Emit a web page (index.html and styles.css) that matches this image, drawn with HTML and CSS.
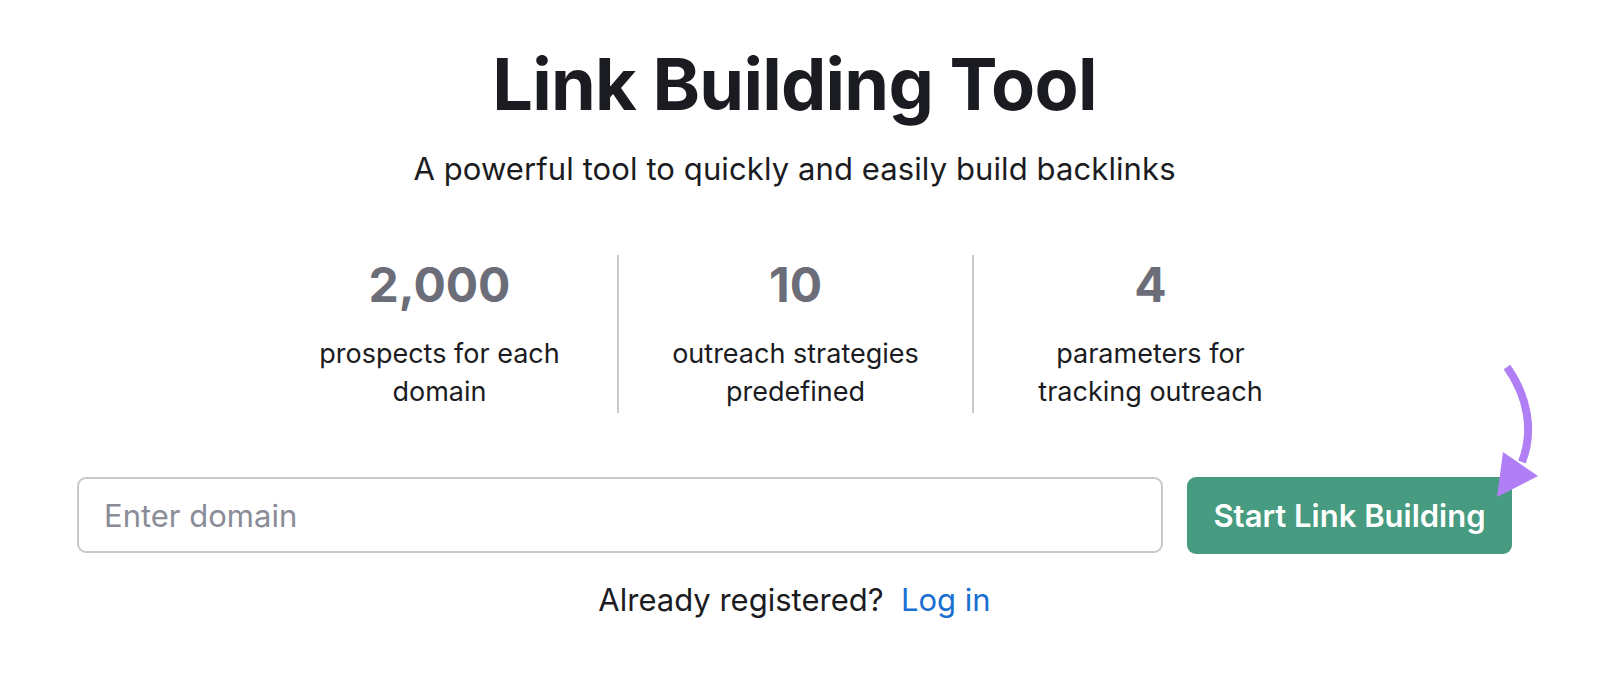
FILE: index.html
```html
<!DOCTYPE html>
<html lang="en">
<head>
<meta charset="utf-8">
<title>Link Building Tool</title>
<link rel="stylesheet" href="styles.css">
</head>
<body>
<main class="page">
  <h1 class="title">Link Building Tool</h1>
  <p class="subtitle">A powerful tool to quickly and easily build backlinks</p>
  <div class="stats">
    <div class="stat">
      <div class="stat-num">2,000</div>
      <div class="stat-text">prospects for each<br>domain</div>
    </div>
    <div class="stat">
      <div class="stat-num">10</div>
      <div class="stat-text">outreach strategies<br>predefined</div>
    </div>
    <div class="stat">
      <div class="stat-num">4</div>
      <div class="stat-text">parameters for<br>tracking outreach</div>
    </div>
  </div>
  <form class="search" onsubmit="return false">
    <input class="domain" type="text" placeholder="Enter domain">
    <button class="start" type="submit">Start Link Building</button>
    <svg class="arrow" width="60" height="150" viewBox="0 0 60 150" aria-hidden="true">
      <path d="M9 6 C 30 36, 36 70, 24 101" fill="none" stroke="#b07ff5" stroke-width="8" stroke-linecap="butt"/>
      <polygon points="5,91 40,115 -1,136" fill="#b07ff5"/>
    </svg>
  </form>
  <p class="login">Already registered?&nbsp; <a href="#" class="login-link">Log in</a></p>
</main>
</body>
</html>
```
FILE: styles.css
```css
html, body {
  margin: 0;
  padding: 0;
  background: #ffffff;
}
body {
  font-family: Inter, "Noto Sans", "Liberation Sans", sans-serif;
  color: #1b1c22;
}
.page {
  padding: 40px 88px 0 77px;
  display: flex;
  flex-direction: column;
  align-items: center;
}
.title {
  margin: 0;
  font-size: 72px;
  line-height: 88px;
  font-weight: 700;
  letter-spacing: -0.75px;
  color: #1b1c22;
}
.subtitle {
  margin: 21px 0 0;
  font-size: 31px;
  line-height: 40px;
  font-weight: 400;
  letter-spacing: 0.1px;
  color: #1b1c22;
}
.stats {
  margin-top: 66px;
  display: flex;
}
.stat {
  width: 355px;
  text-align: center;
  padding: 2px 0 2px;
  box-sizing: border-box;
}
.stat + .stat {
  border-left: 2px solid #cacbd0;
}
.stat-num {
  font-size: 48px;
  line-height: 56px;
  font-weight: 700;
  color: #6b6d78;
}
.stat-text {
  margin-top: 22px;
  font-size: 27px;
  line-height: 38px;
  color: #1b1c22;
}
.search {
  position: relative;
  margin-top: 64px;
  align-self: stretch;
  display: flex;
  gap: 24px;
}
.domain {
  flex: 1;
  height: 76px;
  box-sizing: border-box;
  border: 2px solid #c8c9cf;
  border-radius: 9px;
  padding: 0 25px;
  font-family: inherit;
  font-size: 31px;
  color: #1b1c22;
  outline: none;
}
.domain::placeholder {
  color: #8a8c98;
}
.start {
  width: 325px;
  height: 77px;
  border: none;
  border-radius: 9px;
  background: #469b80;
  color: #ffffff;
  font-family: inherit;
  font-size: 31px;
  font-weight: 600;
  cursor: pointer;
}
.arrow {
  position: absolute;
  right: -46px;
  top: -116px;
  overflow: visible;
}
.login {
  margin: 26px 0 0;
  font-size: 31px;
  line-height: 40px;
  color: #1b1c22;
}
.login-link {
  color: #1a6fd1;
  text-decoration: none;
}
```
